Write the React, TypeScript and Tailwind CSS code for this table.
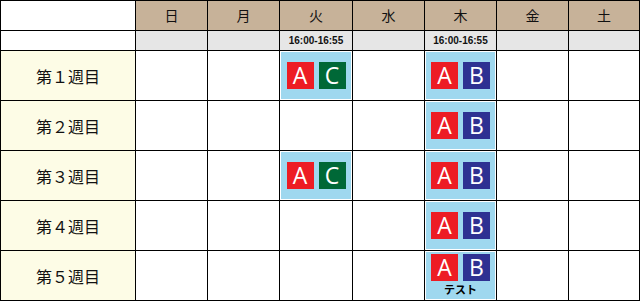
const days = ["日", "月", "火", "水", "木", "金", "土"];
const weeks = ["第１週目", "第２週目", "第３週目", "第４週目", "第５週目"];

type Slot = { letters: string[]; note?: string };

// [week][dayIndex]
const lessons: Record<number, Record<number, Slot>> = {
  0: { 2: { letters: ["A", "C"] }, 4: { letters: ["A", "B"] } },
  1: { 4: { letters: ["A", "B"] } },
  2: { 2: { letters: ["A", "C"] }, 4: { letters: ["A", "B"] } },
  3: { 4: { letters: ["A", "B"] } },
  4: { 4: { letters: ["A", "B"], note: "テスト" } },
};

const badgeColor: Record<string, string> = {
  A: "bg-[#ed1c24]",
  B: "bg-[#2e3192]",
  C: "bg-[#006837]",
};

const times: Record<number, string> = { 2: "16:00-16:55", 4: "16:00-16:55" };

function Badge({ letter }: { letter: string }) {
  return (
    <div
      className={`flex h-[27px] w-[27px] items-center justify-center text-[23px] leading-none text-white ${badgeColor[letter]}`}
      style={{ fontFamily: '"Open Sans", "Noto Sans", sans-serif' }}
    >
      {letter}
    </div>
  );
}

function LessonCell({ slot }: { slot?: Slot }) {
  if (!slot) return <div className="bg-white" />;
  return (
    <div className="bg-white p-px">
      {slot.note ? (
        <div className="flex h-full flex-col items-center bg-[#9fd8ef] pt-[2px]">
          <div className="flex gap-[5px]">
            {slot.letters.map((l) => (
              <Badge key={l} letter={l} />
            ))}
          </div>
          <span className="mt-[3px] text-[11px] font-bold leading-none text-black">{slot.note}</span>
        </div>
      ) : (
        <div className="flex h-full items-center justify-center gap-[5px] bg-[#9fd8ef]">
          {slot.letters.map((l) => (
            <Badge key={l} letter={l} />
          ))}
        </div>
      )}
    </div>
  );
}

export default function App() {
  return (
    <div
      className="grid w-[640px] grid-cols-[134px_71px_71px_72px_71px_71px_71px_70px] grid-rows-[29px_19px_49px_49px_49px_49px_49px] gap-px bg-black p-px"
      style={{ fontFamily: '"Noto Sans CJK JP", sans-serif' }}
    >
      <div className="bg-white" />
      {days.map((d) => (
        <div key={d} className="flex items-center justify-center bg-[#c7b299] text-[14px] text-[#111]">
          {d}
        </div>
      ))}

      <div className="bg-white" />
      {days.map((d, i) => (
        <div
          key={d}
          className="flex items-center justify-center bg-[#e6e6e6] text-[10px] font-bold text-[#111]"
          style={{ fontFamily: '"Liberation Sans", Arial, sans-serif' }}
        >
          {times[i] ?? ""}
        </div>
      ))}

      {weeks.map((w, wi) => (
        <>
          <div key={w} className="flex items-center justify-center bg-[#fdfce6] text-[16px] text-[#111]">
            {w}
          </div>
          {days.map((d, di) => (
            <LessonCell key={`${w}-${d}`} slot={lessons[wi][di]} />
          ))}
        </>
      ))}
    </div>
  );
}
